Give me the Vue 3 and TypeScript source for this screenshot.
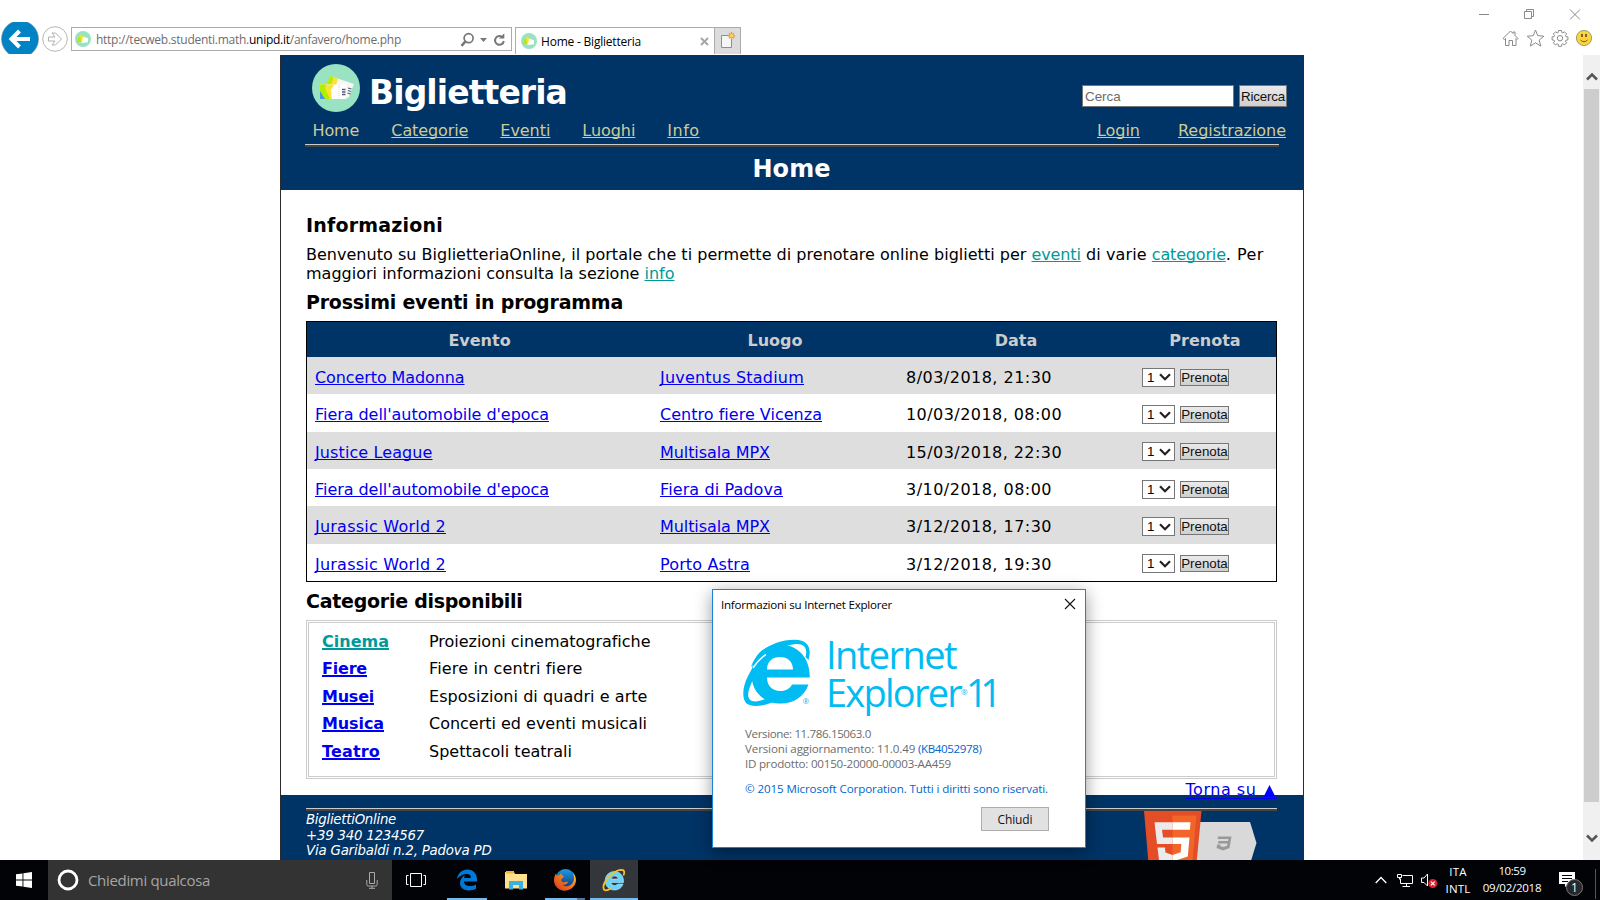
<script setup lang="ts">
interface EventRow {
  name: string
  nameWidth: number
  place: string
  placeWidth: number
  date: string
  dateWidth: number
}
interface Category {
  name: string
  nameWidth: number
  text: string
  textWidth: number
  current?: boolean
}

// Adjusts letter spacing so that a run of text occupies the given width in pixels.
const vFit = {
  mounted(el: HTMLElement, binding: { value: number }) {
    const length = (el.textContent ?? '').length
    const width = el.getBoundingClientRect().width
    if (length > 0) el.style.letterSpacing = `${(binding.value - width) / length}px`
  },
}

const events: EventRow[] = [
  { name: 'Concerto Madonna', nameWidth: 149.5, place: 'Juventus Stadium', placeWidth: 144, date: '8/03/2018, 21:30', dateWidth: 146 },
  { name: "Fiera dell'automobile d'epoca", nameWidth: 234, place: 'Centro fiere Vicenza', placeWidth: 162, date: '10/03/2018, 08:00', dateWidth: 156 },
  { name: 'Justice League', nameWidth: 117.5, place: 'Multisala MPX', placeWidth: 110, date: '15/03/2018, 22:30', dateWidth: 156 },
  { name: "Fiera dell'automobile d'epoca", nameWidth: 234, place: 'Fiera di Padova', placeWidth: 123, date: '3/10/2018, 08:00', dateWidth: 146 },
  { name: 'Jurassic World 2', nameWidth: 131, place: 'Multisala MPX', placeWidth: 110, date: '3/12/2018, 17:30', dateWidth: 146 },
  { name: 'Jurassic World 2', nameWidth: 131, place: 'Porto Astra', placeWidth: 90, date: '3/12/2018, 19:30', dateWidth: 146 },
]

const categories: Category[] = [
  { name: 'Cinema', nameWidth: 67, text: 'Proiezioni cinematografiche', textWidth: 221.5, current: true },
  { name: 'Fiere', nameWidth: 45, text: 'Fiere in centri fiere', textWidth: 153.5 },
  { name: 'Musei', nameWidth: 52, text: 'Esposizioni di quadri e arte', textWidth: 218.5 },
  { name: 'Musica', nameWidth: 62, text: 'Concerti ed eventi musicali', textWidth: 218 },
  { name: 'Teatro', nameWidth: 58, text: 'Spettacoli teatrali', textWidth: 143 },
]
</script>

<template>
  <div class="screen">
    <header class="chrome">
      <div class="caption">
        <svg width="104" height="14" viewBox="0 0 104 14" fill="none" stroke="#8a8a8a">
          <path d="M1 7.500h10" />
          <path d="M46.500 4.500h7v7h-7zM48.500 4.500v-2h7v7h-2" />
          <path d="M92 2.500l10 10M102 2.500l-10 10" />
        </svg>
      </div>
      <div class="toolbar">
        <svg class="nav-buttons" width="70" height="32" viewBox="0 0 70 32">
          <circle cx="20" cy="17" r="18.500" fill="#0083c4" stroke="#7d8b93" stroke-width=".6" />
          <path d="M30 17H12M19.500 9L11.500 17l8 8" fill="none" stroke="#fff" stroke-width="4" />
          <circle cx="55" cy="17" r="12.300" fill="#fff" stroke="#b5b5b5" />
          <path d="M48.500 15h6.500l-3-4h3.500l6 6-6 6h-3.500l3-4h-6.500z" fill="#fff" stroke="#b0b0b0" />
        </svg>
        <div class="address">
          <svg class="fav" width="16" height="16" viewBox="0 0 48 48">
            <circle cx="24" cy="24" r="24" fill="#99e3c2" />
            <path d="M7 24l10-10 22 8v12l-18 2z" fill="#fff" />
            <path d="M7 22l10-10 8 3-4 18-12 1z" fill="#ffe02e" />
            <path d="M7 20l9-4 2 16-11 2z" fill="#b5e61d" />
          </svg>
          <span class="url" v-fit="305">http://tecweb.studenti.math.<b>unipd.it</b>/anfavero/home.php</span>
          <svg class="tools" width="46" height="16" viewBox="0 0 46 16" fill="none" stroke="#777">
            <circle cx="8.600" cy="6.200" r="4.500" stroke-width="1.700" />
            <path d="M5.300 9.600L1.500 13.800" stroke-width="2.500" />
            <path d="M20 6h7l-3.500 4z" fill="#777" stroke="none" />
            <path d="M42.600 5.300A4.400 4.400 0 1 0 43.800 9" stroke-width="2" />
            <path d="M39 6.500h5.300V1.200z" fill="#777" stroke="none" />
          </svg>
        </div>
        <div class="tab">
          <svg class="fav" width="16" height="16" viewBox="0 0 48 48">
            <circle cx="24" cy="24" r="24" fill="#99e3c2" />
            <path d="M7 24l10-10 22 8v12l-18 2z" fill="#fff" />
            <path d="M7 22l10-10 8 3-4 18-12 1z" fill="#ffe02e" />
            <path d="M7 20l9-4 2 16-11 2z" fill="#b5e61d" />
          </svg>
          <span class="tab-title" v-fit="100">Home - Biglietteria</span>
          <svg class="tab-close" width="9" height="9" viewBox="0 0 9 9"><path d="M1 1l7 7M8 1L1 8" stroke="#a6a6a6" stroke-width="2" /></svg>
        </div>
        <div class="new-tab">
          <svg width="16" height="16" viewBox="0 0 16 16">
            <path d="M1.500 3.500h10v12h-10z" fill="#f5f5f5" stroke="#8d8d8d" />
            <path d="M11.500 0v7.500M7.800 3.800h7.500M9 1.200l5 5M14 1.200l-5 5" stroke="#f09c1c" stroke-width="1.300" />
            <circle cx="11.500" cy="3.800" r="1.700" fill="#ffd35c" />
          </svg>
        </div>
        <svg class="actions" width="92" height="18" viewBox="0 0 92 18" fill="none" stroke="#8a8a8a">
          <path d="M1 9.500L8.500 2l2.500 2.500V3h2v3.500L16 9.500l-1 1-1-1V16.500h-3.500v-5h-3.500v5h-3.500V9.500l-1 1z" />
          <path d="M33.500 1l2.300 5.700 6 .5-4.600 3.900 1.500 6-5.200-3.300-5.200 3.300 1.500-6-4.600-3.900 6-.5z" />
          <path d="M56.200 3.500l.3-2h3l.3 2 1 .5 1.700-1.200 2.100 2.100-1.200 1.700.5 1 2 .3v3l-2 .3-.5 1 1.200 1.700-2.100 2.100-1.700-1.200-1 .5-.3 2h-3l-.3-2-1-.5-1.700 1.200-2.100-2.100 1.200-1.700-.5-1-2-.3v-3l2-.3.5-1-1.200-1.700 2.100-2.100 1.700 1.200z" />
          <circle cx="58" cy="9.200" r="2.700" />
          <circle cx="82" cy="9" r="7.600" fill="#fcd53c" stroke="#a79a66" />
          <path d="M80 5v3M84 5v3" stroke="#6b5a1e" stroke-width="1.800" />
          <path d="M78.500 11q3.500 3.500 7 0" stroke="#6b5a1e" />
        </svg>
      </div>
    </header>

    <div class="viewport">
      <div class="page">
        <div class="site-header">
          <div class="brand">
            <svg class="logo" width="48" height="48" viewBox="0 0 48 48">
              <circle cx="24" cy="24" r="24" fill="#99e3c2" />
              <path d="M18 12l24 8-5.500 14L14 26z" fill="#f7f7f7" />
              <path d="M18 12l8 2.700-4 13-8-3z" fill="#ffe135" />
              <path d="M18 12l3.500 1L19 21l-4-.5z" fill="#aef000" />
              <path d="M8 20.500h26.500V35H8z" fill="#fff" />
              <path d="M8 20.500h14L19 26l1 9H8z" fill="#ffe135" />
              <path d="M8 20.500h6l-1 4 5 10.500H8z" fill="#aef000" />
              <path d="M8 27l5 8H8z" fill="#4796e6" />
              <path d="M27 21v14" stroke="#d0d0d0" stroke-dasharray="1 1" />
              <path d="M30 25.500h3.500M30 28h3.500M30 30.500h3.500" stroke="#555c75" stroke-width="1.500" />
              <path d="M36 24l3.500 1M36 26.500l3 1M35.500 29l3 1" stroke="#555c75" stroke-width="1.200" />
            </svg>
            <h1><span v-fit="198">Biglietteria</span></h1>
            <form class="search" @submit.prevent>
              <input type="text" placeholder="Cerca" />
              <button type="submit"><span v-fit="44">Ricerca</span></button>
            </form>
          </div>
          <nav>
            <span class="here" v-fit="46.8">Home</span>
            <a v-fit="77">Categorie</a>
            <a v-fit="50">Eventi</a>
            <a v-fit="53">Luoghi</a>
            <a v-fit="32.300">Info</a>
            <a class="login" v-fit="43">Login</a>
            <a class="register" v-fit="108">Registrazione</a>
          </nav>
          <div class="rule"></div>
          <h2><span v-fit="78">Home</span></h2>
        </div>

        <main>
          <h3><span v-fit="137">Informazioni</span></h3>
          <p>
            <span v-fit="725.500">Benvenuto su BiglietteriaOnline, il portale che ti permette di prenotare online biglietti per </span><a v-fit="49.300">eventi</a><span v-fit="71"> di varie </span><a v-fit="74">categorie</a><span v-fit="38">. Per</span><br />
            <span v-fit="338.500">maggiori informazioni consulta la sezione </span><a v-fit="30">info</a>
          </p>
          <h3><span v-fit="317">Prossimi eventi in programma</span></h3>
          <div class="events">
            <div class="row head">
              <div>Evento</div>
              <div>Luogo</div>
              <div>Data</div>
              <div>Prenota</div>
            </div>
            <div v-for="(e, i) in events" :key="i" class="row" :class="{ odd: i % 2 === 0 }">
              <div><a v-fit="e.nameWidth">{{ e.name }}</a></div>
              <div><a v-fit="e.placeWidth">{{ e.place }}</a></div>
              <div><span v-fit="e.dateWidth">{{ e.date }}</span></div>
              <div class="book">
                <div class="select">
                  <span>1</span>
                  <svg width="12" height="8" viewBox="0 0 12 8"><path d="M1 1.200l5 5 5-5" fill="none" stroke="#222" stroke-width="2.200" /></svg>
                </div>
                <button type="button"><span v-fit="46.500">Prenota</span></button>
              </div>
            </div>
          </div>
          <h3 class="cat-title"><span v-fit="216.500">Categorie disponibili</span></h3>
          <div class="categories">
            <div v-for="c in categories" :key="c.name" class="category">
              <div class="term"><a :class="{ current: c.current }" v-fit="c.nameWidth">{{ c.name }}</a></div>
              <div><span v-fit="c.textWidth">{{ c.text }}</span></div>
            </div>
          </div>
          <div class="top"><a><span v-fit="76.500">Torna su </span><svg width="15" height="12" viewBox="0 0 15 12"><path d="M7.500 0L13.500 12H1.500z" fill="#00f" /></svg></a></div>
        </main>

        <footer>
          <div class="rule"></div>
          <div class="contacts">
            <address>
              <span v-fit="90">BigliettiOnline</span><br />
              <span v-fit="118">+39 340 1234567</span><br />
              <span v-fit="185.500">Via Garibaldi n.2, Padova PD</span>
            </address>
            <svg class="badge" width="114" height="50" viewBox="0 0 114 50">
              <path d="M50 11h56l6.500 21-6.500 21H50z" fill="#d9d9d9" />
              <path d="M0 0h57.500L52 58H5z" fill="#e44d26" />
              <path d="M28.500 4.500H52.500L48 55H28.500z" fill="#f16529" />
              <path d="M28.500 11.200H10.500L13 33h15.500v-6.500H19L18 18.800h10.500zM28.500 44l-7-2.500-.6-5H13.500l1.500 12.500h13.500z" fill="#ebebeb" />
              <path d="M28.500 11.200h18l-.6 7.600H28.500zM28.500 26.500h17l-1.700 19-15.300 5v-6.500l8.200-2.800.6-8.200h-8.800z" fill="#fff" />
              <path d="M74 25.500h13.500L85.500 37l-6.500 2.500-6.500-2.500.8-3.500h3l-.2 1.500 3 1 4-1.200.4-2.400h-9.500l.5-2.500h9.500l.4-2h-10.700z" fill="#999" />
            </svg>
          </div>
        </footer>
      </div>
      <div class="scrollbar">
        <svg width="12" height="9" viewBox="0 0 12 9"><path d="M1 7.500l5-5 5 5" fill="none" stroke="#555" stroke-width="2.500" /></svg>
        <div class="thumb"></div>
        <svg width="12" height="9" viewBox="0 0 12 9"><path d="M1 1.500l5 5 5-5" fill="none" stroke="#555" stroke-width="2.500" /></svg>
      </div>
    </div>

    <div class="taskbar">
      <div class="start">
        <svg width="16" height="16" viewBox="0 0 16 16" fill="#fff"><path d="M0 2.300l6.500-.9v6.100H0zM7.400 1.200L16 0v7.500H7.400zM0 8.400h6.500v6.200L0 13.700zM7.400 8.400H16V16l-8.600-1.200z" /></svg>
      </div>
      <div class="cortana">
        <svg width="22" height="22" viewBox="0 0 22 22"><circle cx="11" cy="11" r="9" fill="none" stroke="#fff" stroke-width="2.800" /></svg>
        <span v-fit="122">Chiedimi qualcosa</span>
        <svg class="mic" width="12" height="17" viewBox="0 0 12 17" fill="none" stroke="#aaa"><path d="M3.500 .5h5v11h-5zM.8 8v4.500q0 1.500 1.500 1.500h7.400q1.500 0 1.500-1.500V8M6 14v2M3 16.300h6" /></svg>
      </div>
      <div class="task view">
        <svg width="20" height="16" viewBox="0 0 20 16" fill="none" stroke="#fff"><path d="M4.500 1.500h11v13h-11zM2.500 3.500h-2v9h2M17.500 3.500h2v9h-2" /></svg>
      </div>
      <div class="task wide">
        <svg width="22" height="22" viewBox="0 0 22 22">
          <path d="M1 10C2 4 6 .5 11.500 .5c6 0 9.500 4.500 9.500 9.500v2.500H8c.2 3.300 2.700 4.600 6 4.600 2.300 0 4.200-.6 6-1.700v4.400c-2 1.200-4.300 1.700-7 1.700C7.500 21.500 4 18.500 4 14c0-3.500 2-6.300 5-7.800C8.600 7 8.200 8 8.100 9h6.800c0-2.700-1.500-4-4-4C7 5 3.500 7 1 10z" fill="#0078d7" />
        </svg>
        <i class="line"></i>
      </div>
      <div class="task folder">
        <svg width="22" height="19" viewBox="0 0 22 19">
          <path d="M0 1h9l1 2h12v14.500H0z" fill="#ffe08c" />
          <path d="M1 0h8v2.500H1z" fill="#f3b42f" />
          <path d="M4 18.500V10h14v8.500h-4V14H8v4.500z" fill="#3cb0e5" />
        </svg>
      </div>
      <div class="task fox">
        <svg width="24" height="24" viewBox="0 0 24 24">
          <defs>
            <linearGradient id="globe" x1="0" y1="0" x2="0" y2="1"><stop offset="0" stop-color="#1b9de2" /><stop offset="1" stop-color="#142f77" /></linearGradient>
            <linearGradient id="fur" x1="1" y1="0" x2="0" y2="1"><stop offset="0" stop-color="#ffd93a" /><stop offset=".4" stop-color="#f58220" /><stop offset="1" stop-color="#d6331c" /></linearGradient>
          </defs>
          <circle cx="12.500" cy="11" r="10" fill="url(#globe)" />
          <path d="M20 4.500c5 6 3.300 13-2 16.300C9 26 1 19.500 1 12.500c0-3 .6-5 2-7l.7 2.300L6.500 7l2-2c0 2 .5 2.700 2.500 3.200l-1.500 2c-2.500 1.700-1.500 4 1 4.200 2 0 3-1 4.500-.5-1 2.500-4 3.200-6 2.600C13 20.500 20.500 17.500 21 11c0-2.500-.3-4.500-1-6.500z" fill="url(#fur)" />
        </svg>
        <i class="line"></i>
      </div>
      <div class="task active">
        <svg width="24" height="24" viewBox="0 0 24 24">
          <path d="M12.500 3.500C17.500 3.500 21.500 7.500 21.500 13v1.500H9c.3 2 1.700 3 3.500 3 1.500 0 2.500-.6 3.200-1.500h5.300c-1.200 3.700-4.300 6-8.500 6-5.300 0-9.300-4-9.300-9.300s4-9.200 9.300-9.200zM9.200 11h7c-.3-1.800-1.700-3-3.500-3s-3.100 1.200-3.500 3z" fill="#69d3fa" stroke="#b8ecfd" stroke-width=".6" />
          <path d="M21.500 7.500c1.500-3.500.8-5.500-1.500-5.500C14.500 1.500 6 8 2.700 14.500 1 18 .8 21.500 3 22.200c2 .5 4-.7 6-2" fill="none" stroke="#f5c328" stroke-width="1.800" />
        </svg>
        <i class="line"></i>
      </div>
      <div class="tray">
        <svg class="chevron" width="12" height="8" viewBox="0 0 12 8"><path d="M.7 7L6 1.500 11.300 7" fill="none" stroke="#fff" stroke-width="1.300" /></svg>
        <svg class="net" width="17" height="15" viewBox="0 0 17 15" fill="none" stroke="#fff"><path d="M5.500 2.500h10v8H3.500v-5M.5 1.500h4v3h-4zM2.500 4.500v2M9.500 10.500v3M5.500 13.500h7.500" /></svg>
        <svg class="vol" width="18" height="16" viewBox="0 0 18 16"><path d="M.5 5h2.500L6.500 1v12L3 9.500H.5z" fill="none" stroke="#fff" /><circle cx="11.800" cy="10.500" r="4.600" fill="#e0202c" /><path d="M9.900 8.600l3.800 3.800M13.700 8.600l-3.800 3.800" stroke="#fff" stroke-width="1.300" /></svg>
        <div class="stack lang"><span v-fit="17.500">ITA</span><span v-fit="25">INTL</span></div>
        <div class="stack clock"><span v-fit="27">10:59</span><span v-fit="58.500">09/02/2018</span></div>
        <div class="notes">
          <svg width="26" height="28" viewBox="0 0 26 28">
            <path d="M0 3h16v12H9.500L6 18v-3H0z" fill="#fff" />
            <path d="M3 6.500h10M3 9.500h10M3 12.500h6" stroke="#000" />
            <circle cx="15.500" cy="18.500" r="8" fill="#26282b" stroke="#777" />
          </svg>
          <span>1</span>
        </div>
      </div>
    </div>

    <section class="dialog">
      <div class="dialog-title">
        <span v-fit="171">Informazioni su Internet Explorer</span>
        <svg width="12" height="12" viewBox="0 0 12 12"><path d="M1 1l10 10M11 1L1 11" stroke="#111" stroke-width="1.100" /></svg>
      </div>
      <div class="product">
        <svg class="ie" width="68" height="68" viewBox="0 0 68 68">
          <path fill-rule="evenodd" d="M37 5.500C54 5.500 66.500 18 66.700 36.500V38.500H24c0 8.500 5.500 13.500 13.500 13.500 5.500 0 9.500-2.500 11.500-6.500H65.500C61.500 57.500 50.500 64.500 38 64.500 20 64.500 8.500 52 8.500 35.500 8.500 18 20 5.500 37 5.500zM24 30.500H50C50 22.500 44.500 18 37 18 29.500 18 24 22.500 24 30.500z" fill="#00bcf2" />
          <path fill-rule="evenodd" d="M8 28C13 12 32 .5 52 .8 65 .8 69 9 65.500 21L62.500 18C65 9 61 4.500 53 5 46 5.500 40 7.500 34 11 22 17 13 29 8.500 44 4 54 4 60 9 62 14 63.500 21 61 27 58L31 62.500C23 66.500 9 69 3.500 64.500-1.500 59-.5 48 5 37 9 29 15 21 22 16 16 19 12 23 8 28z" fill="#00bcf2" />
          <path d="M10 29C14 23 18 18.500 23 15.500" fill="none" stroke="#fff" stroke-width="1.500" />
          <text x="59.500" y="65" class="reg">®</text>
        </svg>
        <div class="name">
          <div><span v-fit="130">Internet</span></div>
          <div><span v-fit="135">Explorer</span><sup>®</sup><span class="eleven">11</span></div>
        </div>
      </div>
      <div class="info">
        <div><span v-fit="126">Versione: 11.786.15063.0</span></div>
        <div><span v-fit="173">Versioni aggiornamento: 11.0.49 </span><a v-fit="63.500">(KB4052978)</a></div>
        <div><span v-fit="206">ID prodotto: 00150-20000-00003-AA459</span></div>
      </div>
      <div class="copyright"><a v-fit="303">© 2015 Microsoft Corporation. Tutti i diritti sono riservati.</a></div>
      <button class="close-button" type="button"><span v-fit="35">Chiudi</span></button>
    </section>
  </div>
</template>

<style>
html,
body {
  margin: 0;
  overflow: hidden;
  background: #fff;
}
</style>

<style scoped>
* {
  box-sizing: border-box;
}
svg {
  display: block;
  flex: none;
}
span,
a {
  white-space: pre;
}
.screen {
  position: relative;
  width: 1600px;
  height: 900px;
  overflow: hidden;
  display: flex;
  flex-direction: column;
  background: #fff;
  font-family: 'DejaVu Sans', sans-serif;
  font-size: 16px;
  color: #000;
}

/* Browser frame */
.chrome {
  height: 55px;
  flex: none;
  font-family: 'Open Sans', 'Noto Sans', sans-serif;
  font-size: 12px;
}
.caption {
  height: 22px;
  display: flex;
  justify-content: flex-end;
  padding: 7px 18px 0 0;
}
.toolbar {
  height: 32px;
  display: flex;
  overflow: hidden;
}
.address {
  display: flex;
  align-items: center;
  width: 441px;
  height: 24px;
  margin: 5px 3px 0 1px;
  padding-left: 3px;
  border: 1px solid #ababab;
}
.url {
  margin-left: 5px;
  padding-top: 2px;
  color: #6d6d6d;
  line-height: 22px;
}
.url b {
  font-weight: normal;
  color: #000;
}
.tools {
  margin-left: auto;
  margin-right: 5px;
  margin-top: 1px;
}
.tab {
  display: flex;
  align-items: center;
  width: 200px;
  height: 27px;
  margin-top: 5px;
  padding-left: 5px;
  border: 1px solid #ababab;
  border-bottom: 0;
}
.tab-title {
  margin-left: 4px;
  padding-top: 1px;
}
.tab-close {
  margin-left: auto;
  margin-right: 5px;
}
.new-tab {
  width: 26px;
  height: 27px;
  margin-top: 5px;
  padding: 4px 0 0 5px;
  background: #dcdcdc;
  border: 1px solid #ababab;
  border-width: 1px 1px 0 0;
}
.actions {
  margin: 7px 6px 0 auto;
}

/* Web page */
.viewport {
  height: 805px;
  flex: none;
  display: flex;
  overflow: hidden;
}
.page {
  width: 1024px;
  height: 900px;
  margin-left: 280px;
  border: 1px solid #2b2b2b;
}
.site-header {
  height: 134px;
  background: #003366;
  color: #fff;
}
.brand {
  display: flex;
  height: 64px;
  padding: 8px 16px 0 31px;
}
h1 {
  margin: 5px 0 0 9px;
  font-size: 33px;
  line-height: 48px;
}
.search {
  display: flex;
  margin: 21px 0 0 auto;
  gap: 5px;
}
.search input {
  width: 152px;
  height: 22px;
  padding: 0 2px;
  border: 1px solid #767676;
  font: 13.330px 'Liberation Sans', sans-serif;
}
.search input::placeholder {
  color: #6b6b6b;
}
button {
  padding: 0;
  border: 1px solid #767676;
  border-radius: 0;
  background: linear-gradient(#eaeaea, #cfcfcf);
  color: #111;
  font: 13.330px 'Liberation Sans', sans-serif;
  display: flex;
  align-items: center;
  justify-content: center;
}
.search button {
  width: 48px;
  height: 22px;
}
nav {
  display: flex;
  height: 24px;
  padding: 0 17px 0 31.500px;
  color: #cccc99;
  line-height: 21px;
}
nav > * {
  margin-right: 32px;
}
a {
  color: #0000ee;
  text-decoration: underline;
  text-decoration-skip-ink: none;
  text-decoration-thickness: 1px;
  text-underline-offset: 1px;
}
nav a {
  color: #cccc99;
}
.login {
  margin: 0 38px 0 auto;
}
.register {
  margin: 0;
}
.rule {
  height: 3px;
  border-top: 1px solid #ccc;
  background: #444;
}
.site-header .rule {
  margin: 0 24px;
}
h2 {
  margin: 3px 0 0 -1px;
  text-align: center;
  font-size: 24px;
  line-height: 38px;
}
main {
  height: 605px;
  padding: 0 26px 0 25px;
}
h3 {
  margin: 0;
  font-size: 19px;
  line-height: 24px;
}
main h3:first-child {
  padding-top: 23px;
}
p {
  margin: 0;
  padding-top: 8px;
  height: 53px;
  line-height: 19px;
}
p a {
  color: #009999;
}
.events {
  width: 971px;
  margin-top: 7px;
  border: 1px solid #000;
}
.row {
  display: grid;
  grid-template-columns: 345px 246px 236px 142px;
  height: 37.350px;
  line-height: 37.350px;
}
.row > div {
  padding: 2px 8px 0;
}
.row.odd {
  background: #dedede;
}
.row.head {
  height: 35px;
  line-height: 35px;
  background: #003366;
  color: #ccc;
  font-weight: bold;
  text-align: center;
}
.row.head > div {
  padding-top: 1px;
}
.row > .book {
  display: flex;
  align-items: center;
  gap: 5px;
  padding-top: 1px;
}
.select {
  display: flex;
  align-items: center;
  width: 33px;
  height: 19px;
  padding: 0 3px 0 4px;
  justify-content: space-between;
  background: #fff;
  border: 1px solid #767676;
  font: 13.330px/17px 'Liberation Sans', sans-serif;
}
.book button {
  width: 49px;
  height: 17px;
}
.cat-title {
  padding-top: 7px;
}
.categories {
  width: 971px;
  height: 159px;
  margin-top: 7px;
  padding: 5px 13px;
  border: 3px double #ccc;
}
.category {
  display: grid;
  grid-template-columns: 107px 1fr;
  height: 27.400px;
  line-height: 27.400px;
}
.term {
  font-weight: bold;
}
.term a {
  text-decoration-thickness: 2px;
}
.term .current {
  color: #009999;
}
.top {
  position: relative;
  display: flex;
  justify-content: flex-end;
  margin-top: 2px;
  line-height: 20px;
}
.top a {
  display: flex;
  align-items: center;
  height: 18px;
  border-bottom: 1px solid #00e;
  text-decoration: none;
}
.top span {
  padding-top: 1px;
}
.top svg {
  margin-top: 2px;
}
footer {
  height: 160px;
  padding: 13px 26px 0 25px;
  background: #003366;
}
.contacts {
  display: flex;
  justify-content: space-between;
  padding-right: 19px;
}
address {
  padding-top: 1px;
  color: #fff;
  font-size: 13.330px;
  line-height: 15.500px;
}
.scrollbar {
  width: 17px;
  margin-left: auto;
  display: flex;
  flex-direction: column;
  align-items: center;
  padding: 17px 0;
  background: #f0f0f0;
}
.thumb {
  width: 15px;
  height: 713px;
  margin: 8px 0 auto;
  background: #cdcdcd;
}

/* Taskbar */
.taskbar {
  height: 40px;
  flex: none;
  display: flex;
  background: #010307;
  color: #fff;
  font-family: 'Open Sans', 'Noto Sans', sans-serif;
  font-size: 12px;
}
.start {
  width: 48px;
  display: grid;
  place-items: center;
}
.cortana {
  display: flex;
  align-items: center;
  width: 344px;
  padding: 0 14px 0 9px;
  background: #333;
  color: #a6a6a6;
  font-size: 15px;
}
.cortana span {
  margin-left: 9px;
}
.mic {
  margin-left: auto;
}
.task {
  position: relative;
  display: grid;
  place-items: center;
  width: 48px;
  flex: none;
}
.view {
  margin-right: -18px;
}
.task.wide {
  width: 54px;
  margin-left: 18px;
}
.folder {
  margin-left: -2px;
}
.line {
  position: absolute;
  left: 6px;
  right: 6px;
  bottom: 0;
  height: 2px;
  background: #76b9ed;
}
.wide .line {
  left: 7px;
  right: 7px;
}
.fox .line {
  left: 4px;
  right: 4px;
  border-right: 8px solid #4c7899;
}
.fox {
  margin-left: 1px;
  margin-right: 1px;
}
.active {
  background: #33373b;
}
.active .line {
  left: 0;
  right: 0;
}
.tray {
  display: flex;
  align-items: flex-start;
  margin-left: auto;
  width: 225px;
  padding-top: 6px;
}
.chevron {
  margin: 10px 10px 0 0;
}
.net {
  margin: 7px 7px 0 0;
}
.vol {
  margin: 7px 0 0;
}
.stack {
  display: flex;
  flex-direction: column;
  align-items: center;
  line-height: 17px;
  font-size: 11.500px;
}
.lang {
  margin: -3px 0 0 6px;
  width: 26px;
}
.clock {
  margin: -4px 0 0 12px;
  width: 58px;
}
.notes {
  position: relative;
  margin: 3px 0 0 18px;
  width: 37px;
  height: 30px;
  border-right: 1px solid #555;
}
.notes span {
  position: absolute;
  left: 12px;
  top: 10px;
  line-height: 17px;
  font-size: 12px;
}

/* About dialog */
.dialog {
  position: absolute;
  left: 712px;
  top: 589px;
  width: 374px;
  height: 259px;
  border: 1px solid #1883d7;
  background: #fff;
  box-shadow: 0 4px 16px rgba(0, 0, 0, 0.4);
  font-family: 'Open Sans', 'Noto Sans', sans-serif;
  font-size: 11.600px;
}
.dialog a {
  color: #0066cc;
  text-decoration: none;
}
.dialog-title {
  display: flex;
  align-items: center;
  justify-content: space-between;
  height: 28px;
  padding: 0 9px 0 8px;
}
.product {
  display: flex;
  height: 93px;
  padding: 19px 0 0 30px;
}
.ie {
  margin-top: 2px;
}
.name {
  margin: -2px 0 0 15px;
  color: #00bcf2;
  font-size: 38px;
  line-height: 38px;
}
.name div {
  display: flex;
  height: 38px;
}
.name sup {
  width: 7px;
  margin: 2px 0 0 0;
  font-size: 8px;
  line-height: 34px;
}
.eleven {
  margin-left: -2px;
  letter-spacing: -7.500px;
}
.reg {
  font-size: 8px;
  fill: #00bcf2;
}
.info {
  padding: 15px 0 0 32px;
  color: #6d6d6d;
  line-height: 15px;
}
.info div,
.copyright {
  height: 15px;
}
.copyright {
  margin: 10px 0 0 32px;
  line-height: 15px;
}
.close-button {
  width: 68px;
  height: 24px;
  margin: 11px 0 0 268px;
  border: 1px solid #adadad;
  background: #e1e1e1;
  font: 12px 'Open Sans', 'Noto Sans', sans-serif;
}
</style>
